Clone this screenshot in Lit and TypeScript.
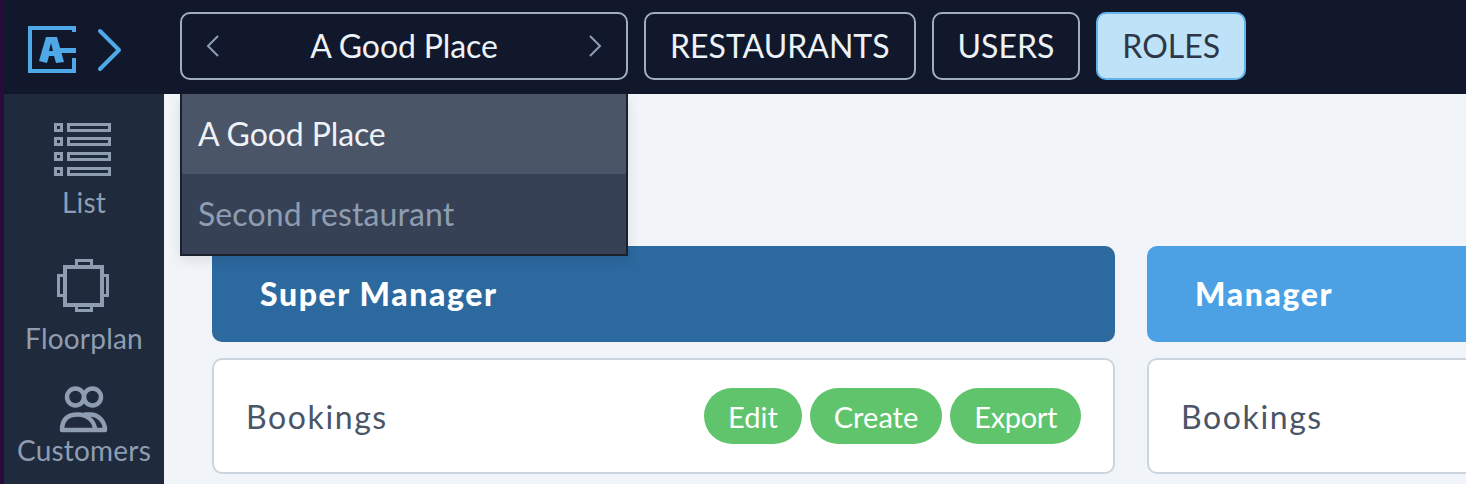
import { LitElement, html, css, svg } from "lit";
import { customElement } from "lit/decorators.js";

@customElement("app-root")
export class AppRoot extends LitElement {
  static styles = css`
    :host {
      display: grid;
      grid-template-columns: 160px 1fr;
      grid-template-rows: 94px 390px;
      width: 1466px;
      height: 484px;
      box-sizing: border-box;
      border-left: 4px solid #2a0a38;
      overflow: hidden;
      position: relative;
      font-family: Lato, "Liberation Sans", sans-serif;
      background: #f1f5f9;
    }
    .top {
      grid-column: 1 / 3;
      background: #11182b;
      display: flex;
      align-items: flex-start;
      gap: 16px;
      padding: 12px 0 0 0;
      box-sizing: border-box;
      position: relative;
      z-index: 2;
    }
    .brand {
      width: 160px;
      height: 68px;
      flex: none;
    }
    .brand svg { display: block; }
    .tabs { display: flex; gap: 16px; }
    .tab {
      box-sizing: border-box;
      height: 68px;
      border: 2px solid #a0aec0;
      border-radius: 10px;
      color: #edf2f7;
      font-size: 32px;
      padding: 0 24px;
      display: flex;
      align-items: center;
      line-height: 1;
    }
    .tab.active {
      background: #bee3f8;
      border-color: #63b3ed;
      color: #2d3748;
    }
    .picker {
      width: 448px;
      justify-content: space-between;
      padding: 0 24px;
      letter-spacing: -0.1px;
    }
    .picker svg { display: block; flex: none; }
    .side {
      background: #1f2a3c;
      box-sizing: border-box;
      display: flex;
      flex-direction: column;
      align-items: center;
      color: #8e9db2;
      font-size: 28px;
      letter-spacing: 0.2px;
      padding-top: 29px;
      overflow: hidden;
    }
    .nav {
      display: flex;
      flex-direction: column;
      align-items: center;
      line-height: 34px;
    }
    .nav svg { display: block; }
    .nav span { display: block; }
    .list { height: 136px; }
    .list span { margin-top: 9px; }
    .floor { height: 126px; }
    .floor span { margin-top: 8px; }
    .cust span { margin-top: 0; }
    .main {
      padding: 152px 0 0 48px;
      display: flex;
      gap: 32px;
      overflow: hidden;
      box-sizing: border-box;
    }
    .col {
      width: 903px;
      flex: none;
      display: flex;
      flex-direction: column;
      gap: 16px;
    }
    .head {
      box-sizing: border-box;
      height: 96px;
      border-radius: 10px;
      color: #fff;
      font-weight: 900;
      font-size: 32px;
      letter-spacing: 1.6px;
      padding: 0 0 2px 48px;
      display: flex;
      align-items: center;
    }
    .head.super { background: #2c699f; }
    .head.mgr { background: #4ba1e3; }
    .row {
      box-sizing: border-box;
      height: 116px;
      background: #fff;
      border: 2px solid #cbd5e0;
      border-radius: 10px;
      padding: 0 32px;
      display: flex;
      align-items: center;
      justify-content: space-between;
      color: #4a5568;
      font-size: 32px;
      letter-spacing: 1.6px;
    }
    .pills { display: flex; gap: 8px; }
    .pill {
      height: 56px;
      border-radius: 28px;
      background: #60c46c;
      color: #fff;
      font-size: 29px;
      letter-spacing: 0;
      padding: 0 24px;
      display: flex;
      align-items: center;
    }
    .pill.export { letter-spacing: -0.35px; }
    .menu {
      position: absolute;
      left: 176px;
      top: 94px;
      width: 448px;
      box-sizing: border-box;
      border: 2px solid #1a202c;
      border-top: 0;
      box-shadow: 0 4px 12px rgba(0, 0, 0, 0.1);
      font-size: 32px;
      z-index: 3;
    }
    .item {
      box-sizing: border-box;
      height: 80px;
      display: flex;
      align-items: center;
      padding: 0 0 2px 16px;
      background: #364156;
      color: #8e9db2;
      letter-spacing: 0.1px;
    }
    .item.on { background: #4a5568; color: #edf2f7; letter-spacing: -0.1px; }
  `;

  render() {
    return html`
      <header class="top">
        <div class="brand">
          <svg width="130" height="68" viewBox="0 0 130 68" fill="none">
            <path d="M70 20V16H26V59H70V46" stroke="#4fa9e8" stroke-width="4"/>
            <path d="M42 25H53L60 50L52 51L50 44H45L43 51L35 49Z" fill="#4fa9e8"/>
            <path d="M47 31L49 39H45Z" fill="#11182b"/>
            <path d="M52 38.500H72" stroke="#4fa9e8" stroke-width="5"/>
            <path d="M96 19L115 38L96 57" stroke="#4fa9e8" stroke-width="4" stroke-linecap="round" stroke-linejoin="round"/>
          </svg>
        </div>
        <nav class="tabs">
          <div class="tab picker">
            <svg width="14" height="24" viewBox="0 0 14 24" fill="none"><path d="M12 2L2 12L12 22" stroke="#8e9db2" stroke-width="2"/></svg>
            <span>A Good Place</span>
            <svg width="14" height="24" viewBox="0 0 14 24" fill="none"><path d="M2 2L12 12L2 22" stroke="#8e9db2" stroke-width="2"/></svg>
          </div>
          <div class="tab">RESTAURANTS</div>
          <div class="tab">USERS</div>
          <div class="tab active">ROLES</div>
        </nav>
      </header>

      <aside class="side">
        <div class="nav list">
          <svg width="60" height="53" viewBox="0 0 60 53" fill="none" stroke="#8e9db2" stroke-width="3">
            ${[0, 14, 29, 44].map(
              (y) => svg`
                <rect x="1.500" y="${y + 1.5}" width="6" height="6"/>
                <rect x="14.500" y="${y + 1.5}" width="41" height="6"/>`
            )}
          </svg>
          <span>List</span>
        </div>
        <div class="nav floor">
          <svg width="54" height="54" viewBox="0 0 54 54" fill="none" stroke="#8e9db2">
            <rect x="8" y="8" width="37" height="38" stroke-width="4"/>
            <path d="M19.500 6V1.500H34.500V6M19.500 48V51.500H34.500V48M6 16.500H1.500V36.500H6M47 16.500H50.500V36.500H47" stroke-width="3"/>
          </svg>
          <span>Floorplan</span>
        </div>
        <div class="nav cust">
          <svg width="50" height="48" viewBox="0 0 50 48" fill="none" stroke="#8e9db2" stroke-width="4.500">
            <circle cx="16.500" cy="12" r="8.500"/>
            <circle cx="33.500" cy="12" r="8.500"/>
            <path d="M3 45C3 34 9 29.500 19 29.500C29 29.500 36 37 36 45Z" stroke-width="4.500" stroke-linejoin="round"/>
            <path d="M25 29.500H31C40 29.500 46 37 46 45H36" stroke-width="4.500" stroke-linejoin="round"/>
          </svg>
          <span>Customers</span>
        </div>
      </aside>

      <main class="main">
        <section class="col">
          <div class="head super">Super Manager</div>
          <div class="row">
            <span>Bookings</span>
            <div class="pills">
              <div class="pill">Edit</div>
              <div class="pill">Create</div>
              <div class="pill export">Export</div>
            </div>
          </div>
        </section>
        <section class="col">
          <div class="head mgr">Manager</div>
          <div class="row"><span>Bookings</span></div>
        </section>
      </main>

      <div class="menu">
        <div class="item on">A Good Place</div>
        <div class="item">Second restaurant</div>
      </div>
    `;
  }
}
